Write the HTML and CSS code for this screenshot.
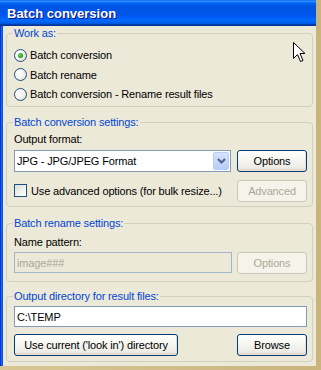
FILE: index.html
```html
<!DOCTYPE html>
<html>
<head>
    <title>Batch conversion</title>
    <meta name="viewport" content="width=device-width, initial-scale=1">
    <link rel="stylesheet" href="styles.css">
</head>

<body>
    <div class="window">
        <div class="titlebar">
            <span class="title">Batch conversion</span>
        </div>
        <div class="frame">
            <div class="edge-left"></div>
            <div class="client">
                <fieldset class="group group-work">
                    <legend>Work as:</legend>
                    <div class="option row-1"><span class="radio checked"></span>Batch conversion</div>
                    <div class="option row-2"><span class="radio"></span>Batch rename</div>
                    <div class="option row-3"><span class="radio"></span>Batch conversion - Rename result files</div>
                </fieldset>

                <fieldset class="group group-convert">
                    <legend>Batch conversion settings:</legend>
                    <div class="caption">Output format:</div>
                    <div class="line line-select">
                        <div class="select">
                            <span class="select-text">JPG - JPG/JPEG Format</span>
                            <span class="select-arrow">
                                <svg width="9" height="6" viewBox="0 0 9 6"><path d="M1 1 L4.5 4.5 L8 1" fill="none" stroke="#4d6185" stroke-width="2"/></svg>
                            </span>
                        </div>
                        <div class="button">Options</div>
                    </div>
                    <div class="line line-check">
                        <div class="check-label"><span class="checkbox"></span>Use advanced options (for bulk resize...)</div>
                        <div class="button disabled">Advanced</div>
                    </div>
                </fieldset>

                <fieldset class="group group-rename">
                    <legend>Batch rename settings:</legend>
                    <div class="caption">Name pattern:</div>
                    <div class="line line-pattern">
                        <div class="textbox disabled">image###</div>
                        <div class="button disabled">Options</div>
                    </div>
                </fieldset>

                <fieldset class="group group-output">
                    <legend>Output directory for result files:</legend>
                    <div class="textbox wide">C:\TEMP</div>
                    <div class="line line-buttons">
                        <div class="button button-current">Use current ('look in') directory</div>
                        <div class="button">Browse</div>
                    </div>
                </fieldset>
            </div>
        </div>
    </div>

    <svg class="cursor" width="14" height="22" viewBox="0 0 14 22">
        <path d="M1.5 1.5 L1.5 17.5 L5.5 13.5 L8.5 20.5 L11 19.5 L8 12.5 L13 12.5 Z" fill="#fff" stroke="#000" stroke-width="1"/>
    </svg>
</body>
</html>
```

FILE: styles.css
```css
body {
    margin: 0;
    padding: 0;
    width: 321px;
    height: 370px;
    overflow: hidden;
    background: linear-gradient(to right, #d8c795, #c9b47c);
    font-family: "Liberation Sans", Arial, sans-serif;
    font-size: 11px;
    letter-spacing: -0.15px;
    color: #000;
    position: relative;
}

.window {
    width: 316px;
    height: 366px;
    display: flex;
    flex-direction: column;
}

.titlebar {
    height: 26px;
    flex: none;
    display: flex;
    align-items: center;
    padding-left: 7px;
    background: linear-gradient(to bottom, #0058ee 0%, #3593ff 4%, #288eff 6%, #127dff 8%, #036ffc 10%, #0262ee 14%, #0057e5 20%, #0054e3 24%, #0055eb 56%, #005bf5 66%, #026afe 76%, #0062ef 86%, #0052d6 92%, #0040ab 94%, #003092 100%);
}

.title {
    color: #fff;
    font-weight: bold;
    font-size: 13px;
    letter-spacing: 0;
    text-shadow: 1px 1px #0f1089;
    padding-top: 1px;
}

.frame {
    flex: 1;
    display: flex;
}

.edge-left {
    width: 3px;
    background: linear-gradient(to right, #0831d9 0, #0831d9 1px, #166aee 1px, #166aee 2px, #0855dd 2px);
}

.client {
    flex: 1;
    background-color: #ece9d8;
    padding-top: 1px;
}

.group {
    margin: 0 3px;
    border: 1px solid #d0d0bf;
    border-radius: 4px;
    padding: 0 5px 0 7px;
    min-width: 0;
}

.group legend {
    color: #0046d5;
    line-height: 13px;
    padding: 0 1px;
    margin-left: -1px;
}

.group-work {
    padding-top: 5px;
    padding-bottom: 2px;
}

.group-convert {
    margin-top: 9px;
    padding-top: 4px;
    padding-bottom: 5px;
}

.group-rename {
    margin-top: 10px;
    padding-top: 6px;
    padding-bottom: 8px;
}

.group-output {
    margin-top: 8px;
    padding-top: 3px;
    padding-bottom: 5px;
}

.option {
    display: flex;
    align-items: center;
    height: 20px;
}

.option.row-2 {
    height: 19px;
}

.radio {
    width: 11px;
    height: 11px;
    border: 1px solid #1c5180;
    border-radius: 50%;
    margin-right: 3px;
    background: radial-gradient(circle at 35% 35%, #fff 0%, #f3f2ec 50%, #d5d3c6 100%);
    display: flex;
    align-items: center;
    justify-content: center;
}

.radio.checked::after {
    content: "";
    width: 5px;
    height: 5px;
    border-radius: 50%;
    background: radial-gradient(circle at 40% 40%, #5fde5f 0%, #21a121 60%, #138513 100%);
}

.caption {
    height: 13px;
    line-height: 13px;
}

.line {
    display: flex;
    justify-content: space-between;
    align-items: center;
}

.line-select {
    margin-top: 4px;
    height: 22px;
}

.line-check {
    margin-top: 8px;
    height: 21px;
}

.line-pattern {
    margin-top: 3px;
    height: 21px;
}

.line-buttons {
    margin-top: 7px;
    height: 22px;
}

.select {
    width: 215px;
    height: 20px;
    border: 1px solid #7f9db9;
    background-color: #fff;
    display: flex;
    align-items: center;
    justify-content: space-between;
}

.select-text {
    padding-left: 2px;
}

.select-arrow {
    width: 16px;
    height: 18px;
    margin-right: 1px;
    border: 1px solid #b9cdfa;
    border-radius: 2px;
    box-sizing: border-box;
    background: linear-gradient(to bottom, #d6e2fd, #b8cdf9);
    display: flex;
    align-items: center;
    justify-content: center;
}

.button {
    width: 68px;
    height: 20px;
    border: 1px solid #003c74;
    border-radius: 3px;
    background: linear-gradient(to bottom, #ffffff 0%, #f7f7f3 40%, #ecebe4 85%, #d6d0c5 100%);
    display: flex;
    align-items: center;
    justify-content: center;
    box-shadow: inset -1px -1px #e3e1d6;
}

.button.disabled {
    border-color: #cac8bb;
    background: #f5f4ea;
    color: #aca899;
    box-shadow: none;
}

.button-current {
    width: 162px;
}

.checkbox {
    width: 11px;
    height: 11px;
    border: 1px solid #1c5180;
    margin-right: 4px;
    background: linear-gradient(135deg, #dcdcd7 0%, #f2f2ee 60%, #fff 100%);
}

.check-label {
    display: flex;
    align-items: center;
}

.textbox {
    height: 19px;
    border: 1px solid #7f9db9;
    background-color: #fff;
    display: flex;
    align-items: center;
    padding-left: 2px;
}

.textbox.disabled {
    width: 214px;
    background-color: #ece9d8;
    border-color: #9fb5c9;
    color: #aca899;
}

.textbox.wide {
    width: 289px;
}

.cursor {
    position: absolute;
    left: 292px;
    top: 41px;
}
```
